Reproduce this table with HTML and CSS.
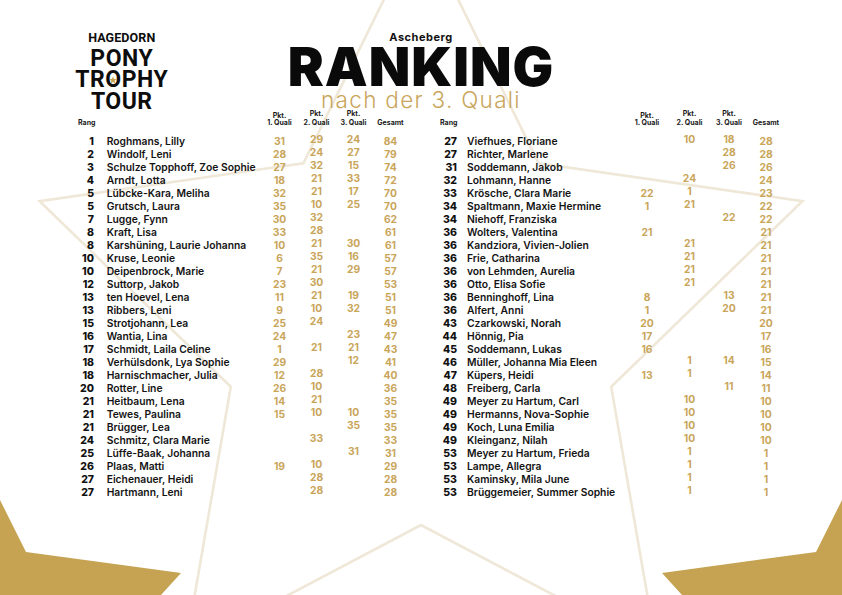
FILE: index.html
```html
<!DOCTYPE html>
<html lang="de">
<head>
<meta charset="utf-8">
<title>Hagedorn Pony Trophy Tour – Ranking Ascheberg</title>
<link rel="stylesheet" href="styles.css">
</head>
<body>
<div class="page">
  <svg class="bg" viewBox="0 0 842 595" width="842" height="595" aria-hidden="true">
    <path class="bg-star" d="M421,-76 L538.6,163.2 L802.4,201.1 L611.2,386.8 L656.7,649.4 L421,525 L185.3,649.4 L230.8,386.8 L39.6,201.1 L303.4,163.2 Z"/>
    <polygon class="bg-gold" points="0,500 26,552 181,573 161,595 0,595"/>
    <polygon class="bg-gold" points="842,500 816,552 662,573 682,595 842,595"/>
  </svg>

  <header class="top">
    <div class="logo">
      <div class="logo-small">HAGEDORN</div>
      <div class="logo-big">PONY</div>
      <div class="logo-big">TR<span class="o-star">O<svg class="mini-star" viewBox="0 0 20 20"><polygon points="10,1 12.6,7.2 19.3,7.6 14.2,11.9 15.9,18.5 10,14.9 4.1,18.5 5.8,11.9 0.7,7.6 7.4,7.2"/></svg></span>PHY</div>
      <div class="logo-big">TOUR</div>
    </div>
    <div class="title">
      <div class="place">Ascheberg</div>
      <h1 class="ranking">RANKING</h1>
      <div class="subtitle">nach der 3. Quali</div>
    </div>
    <div class="spacer"></div>
  </header>

  <main class="tables">
    <section class="rank-table t-left">
      <div class="row head">
        <div class="c-rank">Rang</div><div class="c-name"></div>
        <div class="c-q"><span class="pkt">Pkt.</span><span class="ql">1. Quali</span></div>
        <div class="c-q up"><span class="pkt">Pkt.</span><span class="ql">2. Quali</span></div>
        <div class="c-q up"><span class="pkt">Pkt.</span><span class="ql">3. Quali</span></div>
        <div class="c-q"><span class="ql">Gesamt</span></div>
      </div>
      <div class="row"><div class="c-rank">1</div><div class="c-name">Roghmans, Lilly</div><div class="n">31</div><div class="n up">29</div><div class="n up">24</div><div class="n">84</div></div>
      <div class="row"><div class="c-rank">2</div><div class="c-name">Windolf, Leni</div><div class="n">28</div><div class="n up">24</div><div class="n up">27</div><div class="n">79</div></div>
      <div class="row"><div class="c-rank">3</div><div class="c-name">Schulze Topphoff, Zoe Sophie</div><div class="n">27</div><div class="n up">32</div><div class="n up">15</div><div class="n">74</div></div>
      <div class="row"><div class="c-rank">4</div><div class="c-name">Arndt, Lotta</div><div class="n">18</div><div class="n up">21</div><div class="n up">33</div><div class="n">72</div></div>
      <div class="row"><div class="c-rank">5</div><div class="c-name">Lübcke-Kara, Meliha</div><div class="n">32</div><div class="n up">21</div><div class="n up">17</div><div class="n">70</div></div>
      <div class="row"><div class="c-rank">5</div><div class="c-name">Grutsch, Laura</div><div class="n">35</div><div class="n up">10</div><div class="n up">25</div><div class="n">70</div></div>
      <div class="row"><div class="c-rank">7</div><div class="c-name">Lugge, Fynn</div><div class="n">30</div><div class="n up">32</div><div class="n up"></div><div class="n">62</div></div>
      <div class="row"><div class="c-rank">8</div><div class="c-name">Kraft, Lisa</div><div class="n">33</div><div class="n up">28</div><div class="n up"></div><div class="n">61</div></div>
      <div class="row"><div class="c-rank">8</div><div class="c-name">Karshüning, Laurie Johanna</div><div class="n">10</div><div class="n up">21</div><div class="n up">30</div><div class="n">61</div></div>
      <div class="row"><div class="c-rank">10</div><div class="c-name">Kruse, Leonie</div><div class="n">6</div><div class="n up">35</div><div class="n up">16</div><div class="n">57</div></div>
      <div class="row"><div class="c-rank">10</div><div class="c-name">Deipenbrock, Marie</div><div class="n">7</div><div class="n up">21</div><div class="n up">29</div><div class="n">57</div></div>
      <div class="row"><div class="c-rank">12</div><div class="c-name">Suttorp, Jakob</div><div class="n">23</div><div class="n up">30</div><div class="n up"></div><div class="n">53</div></div>
      <div class="row"><div class="c-rank">13</div><div class="c-name">ten Hoevel, Lena</div><div class="n">11</div><div class="n up">21</div><div class="n up">19</div><div class="n">51</div></div>
      <div class="row"><div class="c-rank">13</div><div class="c-name">Ribbers, Leni</div><div class="n">9</div><div class="n up">10</div><div class="n up">32</div><div class="n">51</div></div>
      <div class="row"><div class="c-rank">15</div><div class="c-name">Strotjohann, Lea</div><div class="n">25</div><div class="n up">24</div><div class="n up"></div><div class="n">49</div></div>
      <div class="row"><div class="c-rank">16</div><div class="c-name">Wantia, Lina</div><div class="n">24</div><div class="n up"></div><div class="n up">23</div><div class="n">47</div></div>
      <div class="row"><div class="c-rank">17</div><div class="c-name">Schmidt, Laila Celine</div><div class="n">1</div><div class="n up">21</div><div class="n up">21</div><div class="n">43</div></div>
      <div class="row"><div class="c-rank">18</div><div class="c-name">Verhülsdonk, Lya Sophie</div><div class="n">29</div><div class="n up"></div><div class="n up">12</div><div class="n">41</div></div>
      <div class="row"><div class="c-rank">18</div><div class="c-name">Harnischmacher, Julia</div><div class="n">12</div><div class="n up">28</div><div class="n up"></div><div class="n">40</div></div>
      <div class="row"><div class="c-rank">20</div><div class="c-name">Rotter, Line</div><div class="n">26</div><div class="n up">10</div><div class="n up"></div><div class="n">36</div></div>
      <div class="row"><div class="c-rank">21</div><div class="c-name">Heitbaum, Lena</div><div class="n">14</div><div class="n up">21</div><div class="n up"></div><div class="n">35</div></div>
      <div class="row"><div class="c-rank">21</div><div class="c-name">Tewes, Paulina</div><div class="n">15</div><div class="n up">10</div><div class="n up">10</div><div class="n">35</div></div>
      <div class="row"><div class="c-rank">21</div><div class="c-name">Brügger, Lea</div><div class="n"></div><div class="n up"></div><div class="n up">35</div><div class="n">35</div></div>
      <div class="row"><div class="c-rank">24</div><div class="c-name">Schmitz, Clara Marie</div><div class="n"></div><div class="n up">33</div><div class="n up"></div><div class="n">33</div></div>
      <div class="row"><div class="c-rank">25</div><div class="c-name">Lüffe-Baak, Johanna</div><div class="n"></div><div class="n up"></div><div class="n up">31</div><div class="n">31</div></div>
      <div class="row"><div class="c-rank">26</div><div class="c-name">Plaas, Matti</div><div class="n">19</div><div class="n up">10</div><div class="n up"></div><div class="n">29</div></div>
      <div class="row"><div class="c-rank">27</div><div class="c-name">Eichenauer, Heidi</div><div class="n"></div><div class="n up">28</div><div class="n up"></div><div class="n">28</div></div>
      <div class="row"><div class="c-rank">27</div><div class="c-name">Hartmann, Leni</div><div class="n"></div><div class="n up">28</div><div class="n up"></div><div class="n">28</div></div>
    </section>

    <section class="rank-table t-right">
      <div class="row head">
        <div class="c-rank">Rang</div><div class="c-name"></div>
        <div class="c-q"><span class="pkt">Pkt.</span><span class="ql">1. Quali</span></div>
        <div class="c-q up"><span class="pkt">Pkt.</span><span class="ql">2. Quali</span></div>
        <div class="c-q up"><span class="pkt">Pkt.</span><span class="ql">3. Quali</span></div>
        <div class="c-q"><span class="ql">Gesamt</span></div>
      </div>
      <div class="row"><div class="c-rank">27</div><div class="c-name">Viefhues, Floriane</div><div class="n"></div><div class="n up">10</div><div class="n up">18</div><div class="n">28</div></div>
      <div class="row"><div class="c-rank">27</div><div class="c-name">Richter, Marlene</div><div class="n"></div><div class="n up"></div><div class="n up">28</div><div class="n">28</div></div>
      <div class="row"><div class="c-rank">31</div><div class="c-name">Soddemann, Jakob</div><div class="n"></div><div class="n up"></div><div class="n up">26</div><div class="n">26</div></div>
      <div class="row"><div class="c-rank">32</div><div class="c-name">Lohmann, Hanne</div><div class="n"></div><div class="n up">24</div><div class="n up"></div><div class="n">24</div></div>
      <div class="row"><div class="c-rank">33</div><div class="c-name">Krösche, Clara Marie</div><div class="n">22</div><div class="n up">1</div><div class="n up"></div><div class="n">23</div></div>
      <div class="row"><div class="c-rank">34</div><div class="c-name">Spaltmann, Maxie Hermine</div><div class="n">1</div><div class="n up">21</div><div class="n up"></div><div class="n">22</div></div>
      <div class="row"><div class="c-rank">34</div><div class="c-name">Niehoff, Franziska</div><div class="n"></div><div class="n up"></div><div class="n up">22</div><div class="n">22</div></div>
      <div class="row"><div class="c-rank">36</div><div class="c-name">Wolters, Valentina</div><div class="n">21</div><div class="n up"></div><div class="n up"></div><div class="n">21</div></div>
      <div class="row"><div class="c-rank">36</div><div class="c-name">Kandziora, Vivien-Jolien</div><div class="n"></div><div class="n up">21</div><div class="n up"></div><div class="n">21</div></div>
      <div class="row"><div class="c-rank">36</div><div class="c-name">Frie, Catharina</div><div class="n"></div><div class="n up">21</div><div class="n up"></div><div class="n">21</div></div>
      <div class="row"><div class="c-rank">36</div><div class="c-name">von Lehmden, Aurelia</div><div class="n"></div><div class="n up">21</div><div class="n up"></div><div class="n">21</div></div>
      <div class="row"><div class="c-rank">36</div><div class="c-name">Otto, Elisa Sofie</div><div class="n"></div><div class="n up">21</div><div class="n up"></div><div class="n">21</div></div>
      <div class="row"><div class="c-rank">36</div><div class="c-name">Benninghoff, Lina</div><div class="n">8</div><div class="n up"></div><div class="n up">13</div><div class="n">21</div></div>
      <div class="row"><div class="c-rank">36</div><div class="c-name">Alfert, Anni</div><div class="n">1</div><div class="n up"></div><div class="n up">20</div><div class="n">21</div></div>
      <div class="row"><div class="c-rank">43</div><div class="c-name">Czarkowski, Norah</div><div class="n">20</div><div class="n up"></div><div class="n up"></div><div class="n">20</div></div>
      <div class="row"><div class="c-rank">44</div><div class="c-name">Hönnig, Pia</div><div class="n">17</div><div class="n up"></div><div class="n up"></div><div class="n">17</div></div>
      <div class="row"><div class="c-rank">45</div><div class="c-name">Soddemann, Lukas</div><div class="n">16</div><div class="n up"></div><div class="n up"></div><div class="n">16</div></div>
      <div class="row"><div class="c-rank">46</div><div class="c-name">Müller, Johanna Mia Eleen</div><div class="n"></div><div class="n up">1</div><div class="n up">14</div><div class="n">15</div></div>
      <div class="row"><div class="c-rank">47</div><div class="c-name">Küpers, Heidi</div><div class="n">13</div><div class="n up">1</div><div class="n up"></div><div class="n">14</div></div>
      <div class="row"><div class="c-rank">48</div><div class="c-name">Freiberg, Carla</div><div class="n"></div><div class="n up"></div><div class="n up">11</div><div class="n">11</div></div>
      <div class="row"><div class="c-rank">49</div><div class="c-name">Meyer zu Hartum, Carl</div><div class="n"></div><div class="n up">10</div><div class="n up"></div><div class="n">10</div></div>
      <div class="row"><div class="c-rank">49</div><div class="c-name">Hermanns, Nova-Sophie</div><div class="n"></div><div class="n up">10</div><div class="n up"></div><div class="n">10</div></div>
      <div class="row"><div class="c-rank">49</div><div class="c-name">Koch, Luna Emilia</div><div class="n"></div><div class="n up">10</div><div class="n up"></div><div class="n">10</div></div>
      <div class="row"><div class="c-rank">49</div><div class="c-name">Kleinganz, Nilah</div><div class="n"></div><div class="n up">10</div><div class="n up"></div><div class="n">10</div></div>
      <div class="row"><div class="c-rank">53</div><div class="c-name">Meyer zu Hartum, Frieda</div><div class="n"></div><div class="n up">1</div><div class="n up"></div><div class="n">1</div></div>
      <div class="row"><div class="c-rank">53</div><div class="c-name">Lampe, Allegra</div><div class="n"></div><div class="n up">1</div><div class="n up"></div><div class="n">1</div></div>
      <div class="row"><div class="c-rank">53</div><div class="c-name">Kaminsky, Mila June</div><div class="n"></div><div class="n up">1</div><div class="n up"></div><div class="n">1</div></div>
      <div class="row"><div class="c-rank">53</div><div class="c-name">Brüggemeier, Summer Sophie</div><div class="n"></div><div class="n up">1</div><div class="n up"></div><div class="n">1</div></div>
    </section>
  </main>
</div>
</body>
</html>
```
FILE: styles.css
```css
* { box-sizing: border-box; }

html, body {
  margin: 0;
  padding: 0;
  background: #ffffff;
}

body {
  font-family: "Inter", "Noto Sans", "DejaVu Sans", sans-serif;
  color: #111111;
}

.page {
  position: relative;
  width: 842px;
  height: 595px;
  overflow: hidden;
  background: #ffffff;
}

/* decorative background */
.bg {
  position: absolute;
  left: 0;
  top: 0;
  z-index: 0;
}
.bg-star {
  fill: none;
  stroke: #efe7d7;
  stroke-width: 2.6;
  stroke-linejoin: miter;
}
.bg-gold {
  fill: #c5a352;
}

/* header */
.top {
  position: relative;
  z-index: 1;
  display: grid;
  grid-template-columns: 243.5px 355px 243.5px;
  height: 112px;
}

.logo {
  display: flex;
  flex-direction: column;
  align-items: center;
  padding-top: 31.6px;
  font-family: "Roboto", "Liberation Sans", sans-serif;
  font-weight: 700;
  color: #0d0d0d;
}
.logo-small {
  font-size: 12.5px;
  line-height: 12px;
  letter-spacing: 0.1px;
  margin-bottom: 4px;
}
.logo-big {
  font-size: 23px;
  line-height: 21.5px;
  letter-spacing: 0.5px;
}
.o-star {
  position: relative;
  display: inline-block;
}
.mini-star {
  position: absolute;
  left: 50%;
  top: 50%;
  width: 8px;
  height: 8px;
  margin-left: -4.3px;
  margin-top: -3.6px;
  fill: #c5a352;
}

.title {
  display: flex;
  flex-direction: column;
  align-items: center;
  padding-top: 31px;
}
.place {
  font-size: 11px;
  line-height: 12px;
  font-weight: 700;
  letter-spacing: 0.5px;
  margin-bottom: 1.7px;
}
.ranking {
  margin: 0;
  font-size: 54px;
  line-height: 44px;
  font-weight: 900;
  letter-spacing: 1px;
  color: #0a0a0a;
}
.subtitle {
  margin-top: 1.6px;
  font-size: 22.5px;
  line-height: 20px;
  font-weight: 300;
  letter-spacing: 1.3px;
  color: #c9a65c;
}

/* tables */
.tables {
  position: relative;
  z-index: 1;
  display: flex;
  gap: 31px;
  padding-left: 78px;
}

.rank-table {
  display: flex;
  flex-direction: column;
}

.t-left .row {
  grid-template-columns: 16px 167px 37px 37px 37px 37px;
}
.t-left .c-name { padding-left: 12.7px; }

.t-right .row {
  grid-template-columns: 17px 170px 40px 45px 34px 40px;
}
.t-right .c-name { padding-left: 10px; }

.row {
  display: grid;
  height: 13px;
  font-size: 10.3px;
  line-height: 13px;
  white-space: nowrap;
}

.row.head {
  height: 14.8px;
  margin-bottom: 8.6px;
  align-items: end;
  font-size: 7px;
  line-height: 7.4px;
  font-weight: 700;
  color: #1a1a1a;
}
.row.head .c-rank {
  text-align: left;
  font-weight: 700;
  font-size: 7px;
}
.c-q {
  display: flex;
  flex-direction: column;
  align-items: center;
  text-align: center;
}
.c-q .pkt,
.c-q .ql {
  display: block;
}
.c-q.up .pkt {
  margin-top: -2px;
  margin-bottom: 2px;
}

.c-rank {
  text-align: right;
  font-weight: 800;
  font-size: 10.5px;
  overflow: visible;
}
.c-name {
  font-weight: 560;
  color: #141414;
}
.n {
  text-align: center;
  font-size: 10.3px;
  font-weight: 700;
  color: #c9a55a;
}
.n.up {
  margin-top: -2px;
}
```
